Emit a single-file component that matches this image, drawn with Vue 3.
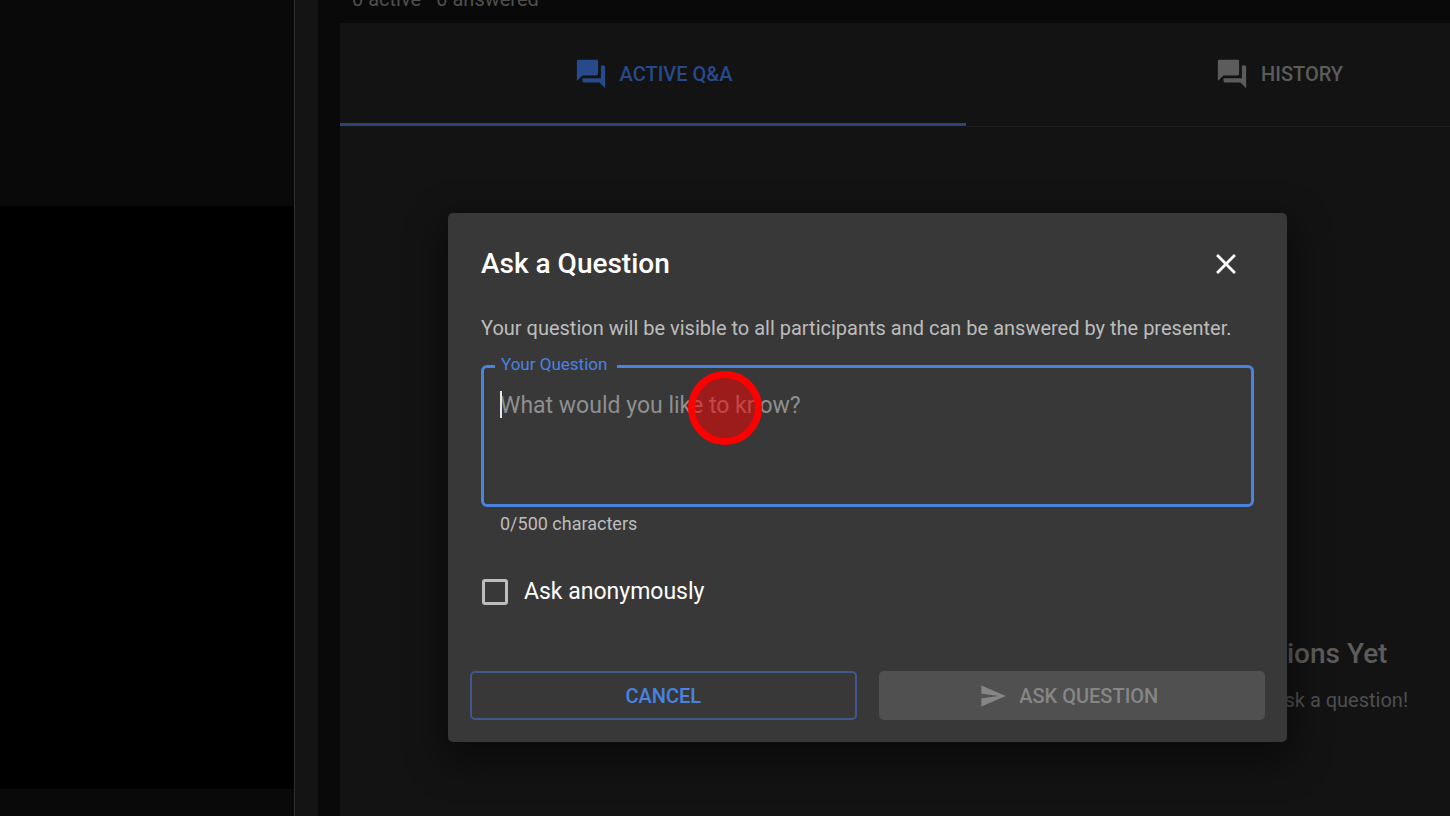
<script setup>
import { ref } from 'vue'

const question = ref('')
const anonymous = ref(false)
const limit = 500
const tabs = [
  { id: 'active', label: 'Active Q&A' },
  { id: 'history', label: 'History' },
]
const current = ref('active')
</script>

<template>
  <div class="page">
    <aside class="stage">
      <div class="video"></div>
    </aside>
    <div class="gutter"></div>
    <main class="content">
      <p class="summary">0 active · 0 answered</p>
      <section class="panel">
        <div class="tabs columns" role="tablist">
          <button
            v-for="tab in tabs"
            :key="tab.id"
            class="tab"
            :class="{ selected: current === tab.id }"
            type="button"
            role="tab"
            :aria-selected="current === tab.id"
            @click="current = tab.id"
          >
            <svg class="tab-icon" viewBox="0 0 24 24" aria-hidden="true">
              <path d="M21 6h-2v9H6v2c0 .55.45 1 1 1h11l4 4V7c0-.55-.45-1-1-1zm-4 6V3c0-.55-.45-1-1-1H3c-.55 0-1 .45-1 1v14l4-4h10c.55 0 1-.45 1-1z" />
            </svg>
            <span>{{ tab.label }}</span>
          </button>
        </div>
        <div class="columns">
          <div class="empty">
            <h3>No Questions Yet</h3>
            <p>Be the first to ask a question!</p>
          </div>
        </div>
      </section>
    </main>

    <div class="overlay">
      <form class="dialog" role="dialog" aria-labelledby="dialog-title" @submit.prevent>
        <header class="dialog-head">
          <h2 id="dialog-title">Ask a Question</h2>
          <button class="close" type="button" aria-label="Close">
            <svg viewBox="0 0 24 24" aria-hidden="true">
              <path d="M19 6.41 17.59 5 12 10.59 6.41 5 5 6.41 10.59 12 5 17.59 6.41 19 12 13.41 17.59 19 19 17.59 13.41 12z" />
            </svg>
          </button>
        </header>
        <div class="dialog-body">
          <p class="intro">Your question will be visible to all participants and can be answered by the presenter.</p>
          <fieldset class="field">
            <legend><label for="question">Your Question</label></legend>
            <textarea id="question" v-model="question" :maxlength="limit" placeholder="What would you like to know?"></textarea>
            <span v-if="!question" class="caret"></span>
            <span class="pointer"></span>
          </fieldset>
          <p class="helper">{{ question.length }}/{{ limit }} characters</p>
          <label class="check">
            <input v-model="anonymous" type="checkbox" />
            <span>Ask anonymously</span>
          </label>
        </div>
        <footer class="actions">
          <button class="action cancel" type="button">Cancel</button>
          <button class="action submit" type="submit" :disabled="!question">
            <svg viewBox="0 0 24 24" aria-hidden="true">
              <path d="M2.01 21 23 12 2.01 3 2 10l15 2-15 2z" />
            </svg>
            <span>Ask Question</span>
          </button>
        </footer>
      </form>
    </div>
  </div>
</template>

<style>
html,
body {
  background: #090909;
}
</style>

<style scoped>
.page {
  position: relative;
  display: grid;
  grid-template-columns: 295px 23px minmax(0, 1fr);
  height: 100vh;
  overflow: hidden;
  background: #090909;
  color: #fff;
  font-family: Roboto, "Liberation Sans", sans-serif;
}
h2, h3, p {
  margin: 0;
}
button {
  font-family: inherit;
  cursor: pointer;
}
svg {
  display: block;
  fill: currentColor;
}
.stage {
  box-sizing: border-box;
  border-right: 1px solid #303030;
  padding: 206px 0 27px;
}
.video {
  height: 100%;
  background: #000;
}
.gutter {
  background: #141414;
}
.content {
  display: flex;
  flex-direction: column;
  padding-left: 22px;
  overflow: hidden;
}
.summary {
  height: 23px;
  margin-top: -12px;
  padding: 0 12px 12px;
  color: #4f4f4f;
  font-size: 20px;
  line-height: 23px;
}
.panel {
  flex: 1;
  background: #131313;
}
.columns {
  display: grid;
  grid-template-columns: 56.4% 56.4%;
}
.tab {
  display: flex;
  align-items: center;
  justify-content: center;
  gap: 12px;
  height: 104px;
  padding: 0 0 2px;
  border: 0;
  border-bottom: 1px solid #1f1f1f;
  background: none;
  color: #5c5c5c;
  font-size: 20px;
  font-weight: 500;
  text-transform: uppercase;
}
.tab.selected {
  border-bottom-color: transparent;
  box-shadow: inset 0 -3px #2d4474;
  color: #274a8a;
}
.tab-icon {
  width: 34px;
  height: 34px;
}
.empty {
  grid-column: 2;
  padding-top: 505px;
  text-align: center;
}
.empty h3 {
  color: #5c5c5c;
  font-size: 28px;
  font-weight: 500;
  line-height: 44px;
}
.empty p {
  padding-top: 10px;
  color: #4f4f4f;
  font-size: 20px;
  line-height: 28px;
}
.overlay {
  position: absolute;
  inset: 0;
  padding: 213px 163px 0 448px;
}
.dialog {
  display: flex;
  flex-direction: column;
  border-radius: 5px;
  background: #383838;
  box-shadow: 0 14px 36px 8px rgba(0, 0, 0, 0.4);
}
.dialog-head {
  display: flex;
  align-items: center;
  justify-content: space-between;
  padding: 29px 44px 15px 33px;
}
.dialog-head h2 {
  font-size: 28px;
  font-weight: 500;
  line-height: 44px;
}
.close {
  width: 34px;
  height: 34px;
  padding: 0;
  border: 0;
  background: none;
  color: #fff;
}
.dialog-body {
  padding: 13px 33px 0;
}
.intro {
  color: #bdbdbd;
  font-size: 20px;
  line-height: 28px;
  white-space: nowrap;
}
.field {
  position: relative;
  min-width: 0;
  margin: 12px 0 0;
  padding: 0 16px;
  border: 3px solid #4a83e0;
  border-radius: 6px;
}
.field legend {
  margin-left: -5px;
  padding: 0 10px 4px 6px;
  color: #4a83e0;
  font-size: 17px;
  line-height: 20px;
}
.field textarea {
  display: block;
  box-sizing: border-box;
  width: 100%;
  height: 126px;
  padding: 12px 0 0;
  border: 0;
  outline: 0;
  background: none;
  color: #fff;
  font-family: inherit;
  font-size: 23px;
  line-height: 32px;
  resize: none;
}
.field textarea::placeholder {
  color: #8f8f8f;
  opacity: 1;
}
.caret {
  position: absolute;
  top: 13px;
  left: 16px;
  width: 2px;
  height: 27px;
  background: #e8e8e8;
}
.pointer {
  position: absolute;
  top: -7px;
  left: 204px;
  box-sizing: border-box;
  width: 74px;
  height: 74px;
  border: 7px solid #f00;
  border-radius: 50%;
  background: rgba(255, 0, 0, 0.5);
  pointer-events: none;
}
.helper {
  padding: 5px 19px 0;
  color: #bdbdbd;
  font-size: 18px;
  line-height: 24px;
}
.check {
  display: flex;
  align-items: center;
  gap: 16px;
  margin-top: 39px;
  padding-left: 1px;
  font-size: 23px;
  line-height: 34px;
}
.check input {
  box-sizing: border-box;
  width: 26px;
  height: 26px;
  margin: 0;
  border: 3px solid #bdbdbd;
  border-radius: 3px;
  appearance: none;
}
.check input:checked {
  background: #4a83e0;
}
.actions {
  display: grid;
  grid-template-columns: 1fr 1fr;
  gap: 22px;
  padding: 62px 22px 22px;
}
.action {
  display: flex;
  align-items: center;
  justify-content: center;
  gap: 12px;
  height: 49px;
  padding: 0;
  border: 2px solid #40598a;
  border-radius: 5px;
  background: none;
  color: #4a83e0;
  font-size: 20px;
  font-weight: 500;
  text-transform: uppercase;
}
.action svg {
  width: 28px;
  height: 28px;
  margin-left: -6px;
}
.submit {
  border: 0;
  background: #505050;
  color: #868686;
}
</style>
